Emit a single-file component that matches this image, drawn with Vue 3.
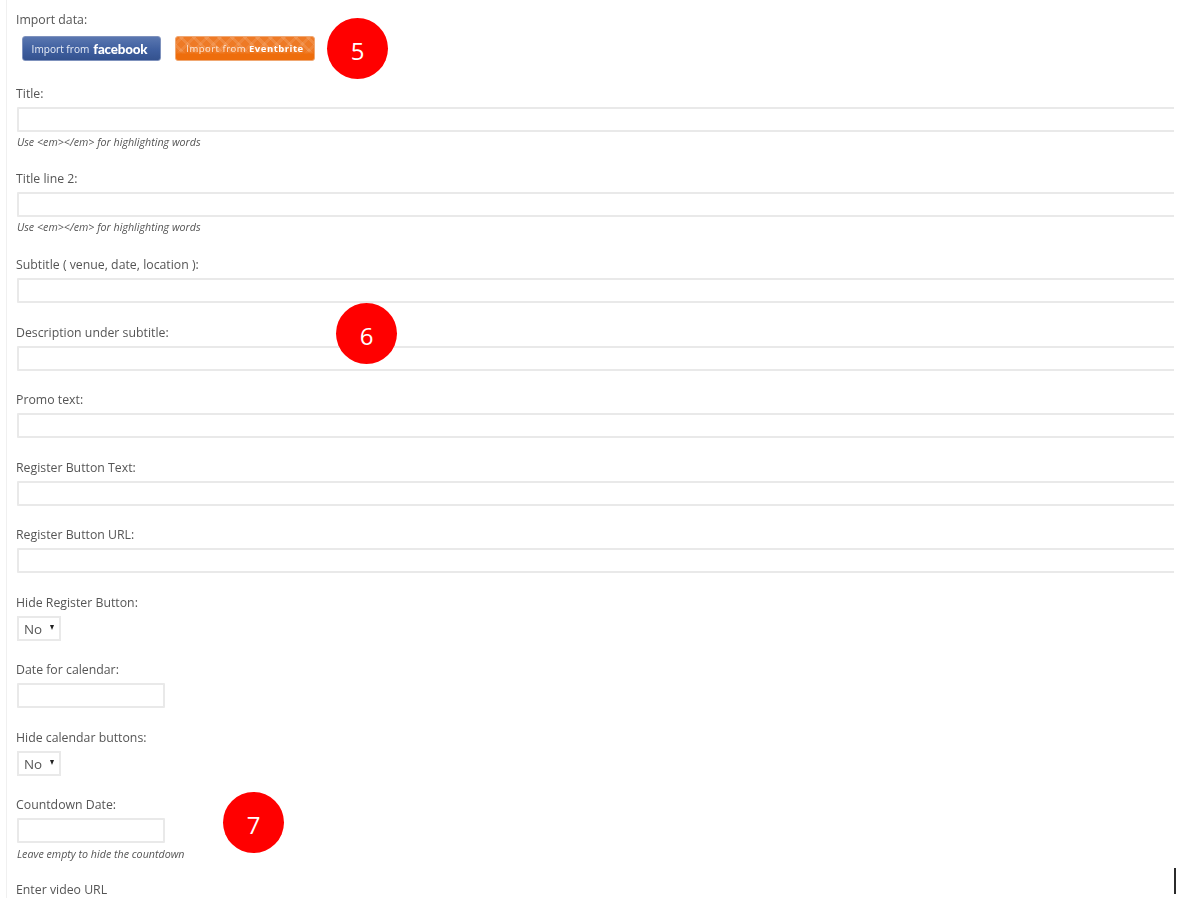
<script setup>
const titleFields = ['Title:', 'Title line 2:']
const textFields = [
  'Subtitle ( venue, date, location ):',
  'Description under subtitle:',
  'Promo text:',
  'Register Button Text:',
  'Register Button URL:'
]
const hint = 'Use <em></em> for highlighting words'
</script>

<template>
  <div class="page">
    <form class="form" @submit.prevent>
      <div class="field import">
        <label>Import data:</label>
        <div class="import-buttons">
          <button type="button" class="btn btn-fb">
            <span class="btn-pre">Import from</span><span class="fb-word">facebook</span>
          </button>
          <button type="button" class="btn btn-eb">
            <span>Import from <b>Eventbrite</b></span>
          </button>
        </div>
      </div>

      <div v-for="t in titleFields" :key="t" class="field with-hint">
        <label>{{ t }}</label>
        <input class="wide" type="text" />
        <small>{{ hint }}</small>
      </div>

      <div v-for="t in textFields" :key="t" class="field">
        <label>{{ t }}</label>
        <input class="wide" type="text" />
      </div>

      <div class="field">
        <label>Hide Register Button:</label>
        <div class="select">No<i class="caret"></i></div>
      </div>

      <div class="field">
        <label>Date for calendar:</label>
        <input class="short" type="text" />
      </div>

      <div class="field">
        <label>Hide calendar buttons:</label>
        <div class="select">No<i class="caret"></i></div>
      </div>

      <div class="field countdown">
        <label>Countdown Date:</label>
        <input class="short" type="text" />
        <small>Leave empty to hide the countdown</small>
      </div>

      <div class="field last">
        <label>Enter video URL</label>
      </div>
    </form>

    <span class="badge b5">5</span>
    <span class="badge b6">6</span>
    <span class="badge b7">7</span>
    <span class="cursor"></span>
  </div>
</template>

<style>
html, body { margin: 0; background: #fff; }
</style>

<style scoped>
.page {
  position: relative;
  width: 1178px;
  height: 905px;
  overflow: hidden;
  background: #fff;
  font-family: "Open Sans", "Noto Sans", sans-serif;
}
.form {
  width: 1168px;
  height: 898px;
  margin-left: 6px;
  padding: 11px 0 0 10px;
  box-sizing: border-box;
  border-left: 1px solid #f0f0f0;
  overflow: hidden;
  filter: blur(0.5px);
}
.field { margin-bottom: 20.5px; }
.with-hint { margin-bottom: 22.8px; }
.countdown { margin-bottom: 20.6px; }
.import { margin-bottom: 23.5px; }
.last { margin-bottom: 0; }
label {
  display: block;
  height: 16px;
  padding-top: 1px;
  margin: 0 0 5px -1px;
  font-size: 12.3px;
  line-height: 16px;
  color: #555;
}
input {
  display: block;
  height: 25px;
  margin: 0;
  padding: 0 6px;
  box-sizing: border-box;
  background: #fff;
  border: 2px solid #e9e9e9;
  border-radius: 1px;
  outline: none;
}
.wide { width: 1200px; }
.short { width: 148px; }
small {
  display: block;
  height: 12px;
  margin-top: 4px;
  font-size: 10.7px;
  line-height: 12px;
  font-style: italic;
  color: #555;
}
.countdown small { margin-top: 5px; }
.import-buttons {
  display: flex;
  gap: 14px;
  margin: 8px 0 0 5px;
}
.btn {
  height: 25px;
  padding: 0;
  display: flex;
  align-items: center;
  justify-content: center;
  gap: 4px;
  border: 1px solid #7f92bd;
  border-radius: 3px;
  color: #e8edf6;
  font-family: inherit;
  font-size: 10.1px;
  white-space: pre;
}
.btn-fb {
  width: 139px;
  padding-right: 4px;
  background: linear-gradient(#5a77b0, #3f5f9f 55%, #34528f);
}
.fb-word {
  font-family: "Lato", sans-serif;
  font-size: 13.4px;
  font-weight: 900;
  letter-spacing: -0.2px;
  color: #fff;
}
.btn-eb {
  width: 140px;
  border-color: #f0a873;
  color: #fde9d8;
  font-size: 9.5px;
  letter-spacing: 0.5px;
  background:
    linear-gradient(transparent 60%, #ee6d0c 75%),
    repeating-linear-gradient(45deg, rgba(255,255,255,0.12) 0 3px, transparent 3px 9px),
    repeating-linear-gradient(-45deg, rgba(255,255,255,0.09) 0 3px, transparent 3px 9px),
    #ee7a26;
}
.btn-eb b { font-weight: 700; color: #fff; }
.select {
  position: relative;
  width: 44px;
  height: 25px;
  padding-left: 5px;
  box-sizing: border-box;
  background: #fff;
  border: 2px solid #e9e9e9;
  font-size: 13.4px;
  line-height: 22px;
  color: #555;
}
.caret {
  position: absolute;
  top: 7px;
  right: 5px;
  width: 0;
  height: 0;
  border-left: 2.5px solid transparent;
  border-right: 2.5px solid transparent;
  border-top: 5px solid #222;
}
.badge {
  position: absolute;
  width: 61px;
  height: 61px;
  border-radius: 50%;
  background: #f00;
  color: #fff;
  font-size: 24px;
  line-height: 66px;
  text-align: center;
  font-family: "Open Sans", sans-serif;
}
.b5 { left: 327px; top: 18px; }
.b6 { left: 336px; top: 303px; }
.b7 { left: 223px; top: 792px; }
.cursor {
  position: absolute;
  left: 1174px;
  top: 868px;
  width: 2px;
  height: 26px;
  background: #2b2b2b;
}
</style>
